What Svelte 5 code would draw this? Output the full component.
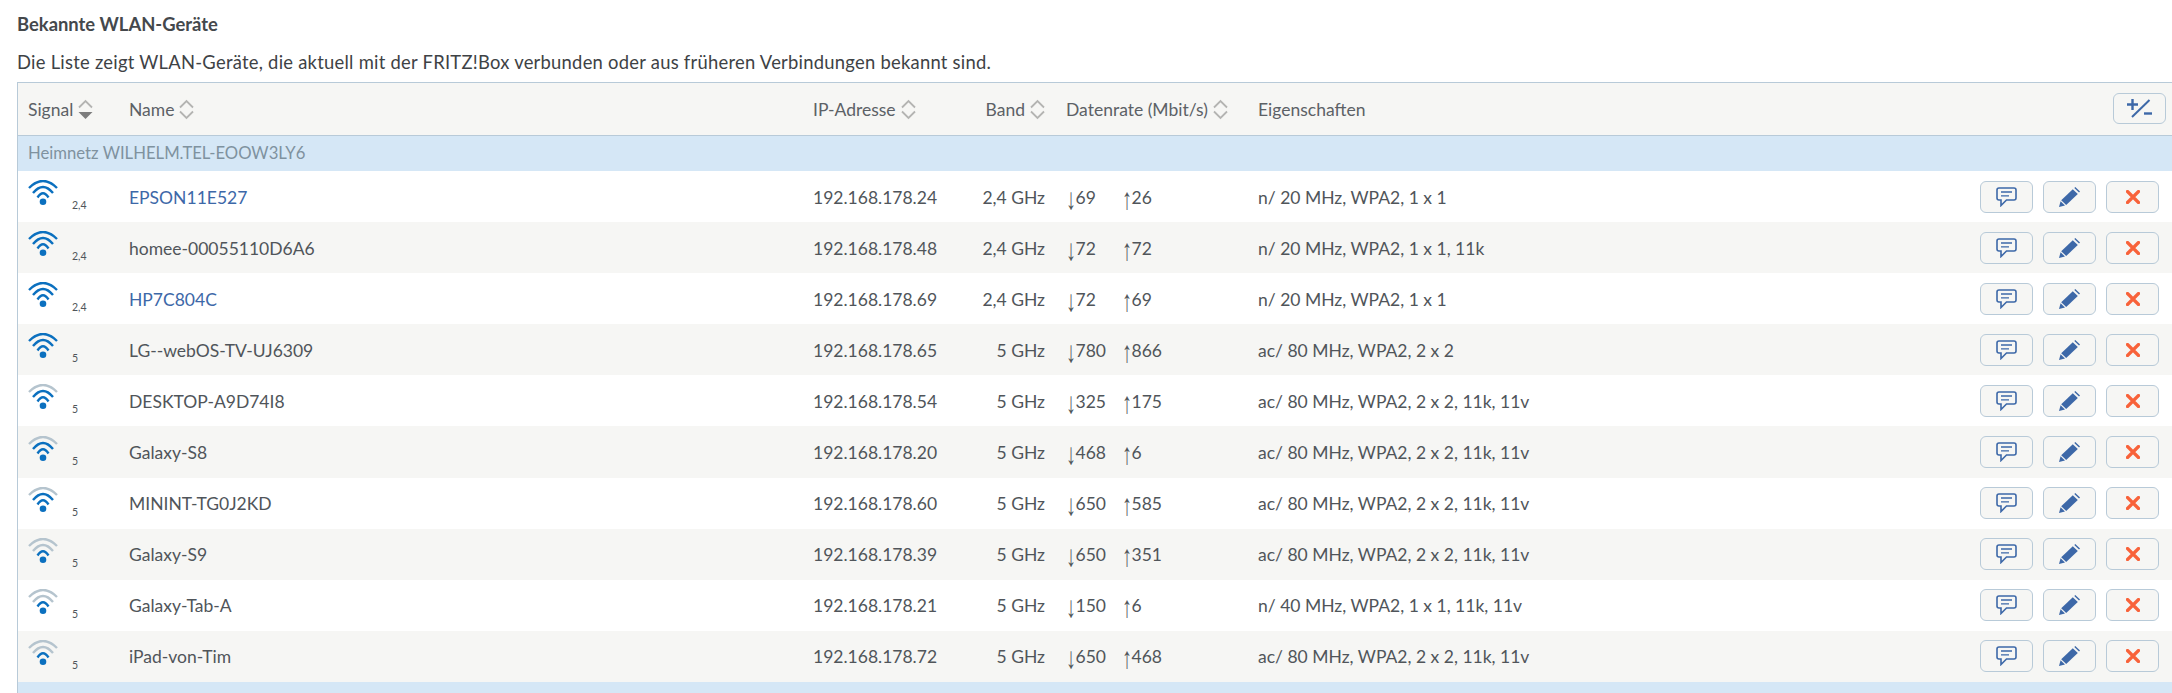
<script>
  const devices = [
    { name: 'EPSON11E527', link: true, bars: 4, radio: '2,4', ip: '192.168.178.24', band: '2,4 GHz', down: '69', up: '26', props: 'n/ 20 MHz, WPA2, 1 x 1' },
    { name: 'homee-00055110D6A6', bars: 4, radio: '2,4', ip: '192.168.178.48', band: '2,4 GHz', down: '72', up: '72', props: 'n/ 20 MHz, WPA2, 1 x 1, 11k' },
    { name: 'HP7C804C', link: true, bars: 4, radio: '2,4', ip: '192.168.178.69', band: '2,4 GHz', down: '72', up: '69', props: 'n/ 20 MHz, WPA2, 1 x 1' },
    { name: 'LG--webOS-TV-UJ6309', bars: 4, radio: '5', ip: '192.168.178.65', band: '5 GHz', down: '780', up: '866', props: 'ac/ 80 MHz, WPA2, 2 x 2' },
    { name: 'DESKTOP-A9D74I8', bars: 3, radio: '5', ip: '192.168.178.54', band: '5 GHz', down: '325', up: '175', props: 'ac/ 80 MHz, WPA2, 2 x 2, 11k, 11v' },
    { name: 'Galaxy-S8', bars: 3, radio: '5', ip: '192.168.178.20', band: '5 GHz', down: '468', up: '6', props: 'ac/ 80 MHz, WPA2, 2 x 2, 11k, 11v' },
    { name: 'MININT-TG0J2KD', bars: 3, radio: '5', ip: '192.168.178.60', band: '5 GHz', down: '650', up: '585', props: 'ac/ 80 MHz, WPA2, 2 x 2, 11k, 11v' },
    { name: 'Galaxy-S9', bars: 2, radio: '5', ip: '192.168.178.39', band: '5 GHz', down: '650', up: '351', props: 'ac/ 80 MHz, WPA2, 2 x 2, 11k, 11v' },
    { name: 'Galaxy-Tab-A', bars: 2, radio: '5', ip: '192.168.178.21', band: '5 GHz', down: '150', up: '6', props: 'n/ 40 MHz, WPA2, 1 x 1, 11k, 11v' },
    { name: 'iPad-von-Tim', bars: 2, radio: '5', ip: '192.168.178.72', band: '5 GHz', down: '650', up: '468', props: 'ac/ 80 MHz, WPA2, 2 x 2, 11k, 11v' }
  ];
</script>

{#snippet sorter(active)}
  <svg class="sorter" width="15" height="21" viewBox="0 0 15 21">
    <path d="M1 8.5 L7.5 2 L14 8.5" fill="none" stroke="#b4b4b2" stroke-width="1.8" />
    {#if active}
      <path d="M0.5 13 H14.5 L7.5 20 Z" fill="#7d7d7d" />
    {:else}
      <path d="M1 12.5 L7.5 19 L14 12.5" fill="none" stroke="#b4b4b2" stroke-width="1.8" />
    {/if}
  </svg>
{/snippet}

{#snippet wifi(bars)}
  <svg class="wifi" width="30" height="25" viewBox="0 0 30 25">
    <path d="M1 8 Q15 -6 29 8" fill="none" stroke={bars > 3 ? '#0b70bf' : '#b5c4ce'} stroke-width="2.4" />
    <path d="M5 13 Q15 1 25 13" fill="none" stroke={bars > 2 ? '#0b70bf' : '#b5c4ce'} stroke-width="2.4" />
    <path d="M9.5 17.5 Q15 9 20.5 17.5" fill="none" stroke="#0b70bf" stroke-width="2.4" />
    <circle cx="15" cy="21.7" r="3.3" fill="#0b70bf" />
  </svg>
{/snippet}

<main>
  <h4>Bekannte WLAN-Geräte</h4>
  <p>Die Liste zeigt WLAN-Geräte, die aktuell mit der FRITZ!Box verbunden oder aus früheren Verbindungen bekannt sind.</p>

  <div class="table">
    <div class="row head">
      <div class="signal">Signal {@render sorter(true)}</div>
      <div class="name">Name {@render sorter(false)}</div>
      <div class="ip">IP-Adresse {@render sorter(false)}</div>
      <div class="band">Band {@render sorter(false)}</div>
      <div class="rate">Datenrate (Mbit/s) {@render sorter(false)}</div>
      <div class="props">Eigenschaften</div>
      <div class="actions">
        <button class="toggle" aria-label="Spalten">
          <svg width="26" height="19" viewBox="0 0 26 19">
            <path d="M0 5.5 H11 M5.5 0 V11" stroke="#3d68a8" stroke-width="2.4" fill="none" />
            <path d="M5 18 L22.5 1" stroke="#3d68a8" stroke-width="2" fill="none" />
            <path d="M17 14.5 H25" stroke="#3d68a8" stroke-width="2.4" fill="none" />
          </svg>
        </button>
      </div>
    </div>

    <div class="group">Heimnetz WILHELM.TEL-EOOW3LY6</div>

    {#each devices as d}
      <div class="row device">
        <div class="signal">
          {@render wifi(d.bars)}
          <span class="radio">{d.radio}</span>
        </div>
        <div class="name" class:link={d.link}>{d.name}</div>
        <div class="ip">{d.ip}</div>
        <div class="band">{d.band}</div>
        <div class="rate">
          <span class="down"><span class="arrow">↓</span>{d.down}</span><span><span class="arrow">↑</span>{d.up}</span>
        </div>
        <div class="props">{d.props}</div>
        <div class="actions">
          <button aria-label="Nachricht">
            <svg width="21" height="20" viewBox="0 0 21 20">
              <path d="M3 1 H18 Q20 1 20 3 V11 Q20 13 18 13 H10.5 L5 18.5 V13 H3 Q1 13 1 11 V3 Q1 1 3 1 Z" fill="none" stroke="#3d68a8" stroke-width="1.6" />
              <path d="M5 5 H16 M5 8.8 H13" stroke="#3d68a8" stroke-width="1.3" />
            </svg>
          </button>
          <button aria-label="Bearbeiten">
            <svg width="21" height="20" viewBox="0 0 21 20">
              <path d="M15.3 0.9 L16.3 0 L21 4.4 L20 5.5 Z" fill="#3d68a8" />
              <path d="M13.8 2.2 L18.8 7 L7.2 18 L2.2 13.2 Z" fill="#3d68a8" />
              <path d="M1.6 14.3 L6 18.5 L0 20 Z" fill="#3d68a8" />
            </svg>
          </button>
          <button aria-label="Löschen">
            <svg width="14" height="14" viewBox="0 0 14 14">
              <path d="M1.5 1.5 L12.5 12.5 M12.5 1.5 L1.5 12.5" stroke="#f8623a" stroke-width="3.2" stroke-linecap="round" />
            </svg>
          </button>
        </div>
      </div>
    {/each}

    <div class="group tail"></div>
  </div>
</main>

<style>
  :global(body) {
    margin: 0;
    background: #fff;
    overflow: hidden;
  }
  main {
    font-family: Lato, sans-serif;
    font-size: 17.5px;
    color: #50555a;
    height: 693px;
    overflow: hidden;
    padding-left: 17px;
  }
  h4 {
    margin: 0;
    padding-top: 11px;
    font-size: 18.4px;
    line-height: 26px;
    font-weight: 700;
    color: #44484c;
  }
  p {
    margin: 12px 0 0;
    font-size: 18.4px;
    letter-spacing: 0.25px;
    line-height: 26px;
    color: #3e4245;
  }
  .table {
    margin-top: 7px;
    border-top: 1px solid #b8cad8;
    border-left: 1px solid #b8cad8;
  }
  .row {
    display: flex;
    align-items: center;
  }
  .head {
    height: 52px;
    background: #f6f6f4;
    border-bottom: 1px solid #b8cad8;
    color: #5c6166;
  }
  .head > div {
    display: flex;
    align-items: center;
    gap: 5px;
  }
  .group {
    height: 35px;
    line-height: 35px;
    padding-left: 10px;
    font-size: 16.7px;
    background: #d5e7f6;
    color: #7f929f;
  }
  .tail {
    height: 12px;
  }
  .device {
    height: 51.1px;
    padding-top: 1px;
    box-sizing: border-box;
  }
  .device:nth-child(even) {
    background: #f6f6f4;
  }
  .signal {
    width: 111px;
    padding-left: 10px;
    box-sizing: border-box;
    flex: none;
  }
  .device .signal {
    display: flex;
    align-items: flex-start;
    height: 50px;
  }
  .wifi {
    margin-top: 8px;
  }
  .radio {
    font-size: 10.5px;
    line-height: 12px;
    margin: 27px 0 0 14px;
  }
  .name {
    width: 684px;
    flex: none;
  }
  .link {
    color: #3d68a8;
  }
  .ip {
    width: 150px;
    flex: none;
  }
  .band {
    width: 82px;
    flex: none;
    justify-content: flex-end;
    text-align: right;
    margin-right: 21px;
  }
  .rate {
    width: 192px;
    flex: none;
  }
  .down {
    display: inline-block;
    width: 56px;
  }
  .arrow {
    display: inline-block;
    width: 9.5px;
    font-family: "Liberation Serif", serif;
    font-size: 20px;
    line-height: 14px;
    transform: translateY(1.5px) scaleY(1.5);
  }
  .props {
    flex: 1;
  }
  .actions {
    display: flex;
    gap: 10px;
    padding-right: 13px;
    margin-top: -1px;
    justify-content: flex-end;
  }
  button {
    width: 53px;
    height: 32px;
    padding: 0;
    display: flex;
    align-items: center;
    justify-content: center;
    background: #f6f6f4;
    border: 1px solid #b8cad8;
    border-radius: 6px;
  }
  .toggle {
    height: 31px;
    margin-right: -7px;
  }
</style>
